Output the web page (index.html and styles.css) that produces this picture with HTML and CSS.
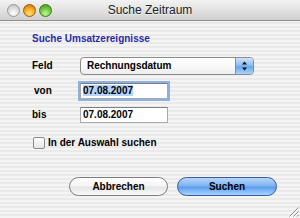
FILE: index.html
```html
<!DOCTYPE html>
<html>
<head>
<meta charset="utf-8">
<link rel="stylesheet" href="styles.css">
</head>
<body>
<div class="window">
  <div class="titlebar">
    <div class="lights">
      <span class="light close"></span>
      <span class="light mini"></span>
      <span class="light zoom"></span>
    </div>
    <div class="title">Suche Zeitraum</div>
    <div></div>
  </div>
  <div class="content">
    <div class="heading">Suche Umsatzereignisse</div>
    <div class="form">
      <div class="label">Feld</div>
      <div class="popup">
        <span class="popup-text">Rechnungsdatum</span>
        <span class="arrows">
          <svg width="7" height="10" viewBox="0 0 7 10"><path d="M3.5 0.5 L6 3.5 H1 Z" fill="#111"/><path d="M3.5 9.5 L6 6.5 H1 Z" fill="#111"/></svg>
        </span>
      </div>
      <div class="label von">von</div>
      <div class="field focus"><span class="sel">07.08.2007</span></div>
      <div class="label">bis</div>
      <div class="field">07.08.2007</div>
    </div>
    <div class="check"><span class="box"></span><span>In der Auswahl suchen</span></div>
    <div class="buttons">
      <div class="btn cancel">Abbrechen</div>
      <div class="btn default">Suchen</div>
    </div>
  </div>
  <svg class="grip" width="11" height="11" viewBox="0 0 11 11">
    <path d="M10.5 1.5 L1.5 10.5 M10.5 5.5 L5.5 10.5 M10.5 9 L9 10.5" stroke="#8a8a8a" stroke-width="1"/>
    <path d="M10.5 2.5 L2.5 10.5 M10.5 6.5 L6.5 10.5" stroke="#fff" stroke-width="1"/>
  </svg>
</div>
</body>
</html>
```
FILE: styles.css
```css
html, body {
  margin: 0;
  padding: 0;
}
body {
  width: 300px;
  height: 218px;
  overflow: hidden;
  font-family: "Liberation Sans", Arial, sans-serif;
}
.window {
  position: relative;
  width: 300px;
  height: 218px;
  display: flex;
  flex-direction: column;
  background: repeating-linear-gradient(#f4f4f4 0 2px, #eaeaea 2px 4px);
}
.titlebar {
  box-sizing: border-box;
  height: 21px;
  border-bottom: 1px solid #8e8e8e;
  background: linear-gradient(#f2f2f2, #e2e2e2 50%, #cfcfcf);
  display: grid;
  grid-template-columns: 1fr auto 1fr;
  align-items: center;
}
.lights {
  display: flex;
  gap: 3px;
  padding-left: 7px;
}
.light {
  box-sizing: border-box;
  width: 13px;
  height: 13px;
  border-radius: 50%;
}
.close {
  background: radial-gradient(circle at 50% 75%, #ffffff, #dcdcdc 55%, #b8b8b8);
  border: 1px solid #9a9a9a;
}
.mini {
  background: radial-gradient(circle at 50% 78%, #ffe27a, #f6a21c 55%, #c7640a);
  border: 1px solid #a15a10;
}
.zoom {
  background: radial-gradient(circle at 50% 78%, #c6f59a, #6cc33a 55%, #3d8c1c);
  border: 1px solid #3f7a1e;
}
.title {
  font-size: 12px;
  color: #222;
  text-shadow: 0 1px 0 rgba(255,255,255,0.6);
  line-height: 14px;
}
.content {
  display: flex;
  flex-direction: column;
  padding: 12px 23px 0 32px;
  font-size: 10px;
  font-weight: bold;
  color: #000;
}
.heading {
  line-height: 12px;
  color: #2a2aa6;
}
.form {
  margin-top: 12px;
  display: grid;
  grid-template-columns: 48px auto;
  row-gap: 8px;
  align-items: center;
  justify-items: start;
}
.label {
  line-height: 12px;
}
.von {
  padding-left: 2px;
}
.popup {
  box-sizing: border-box;
  width: 174px;
  height: 18px;
  border: 1px solid #8c8c8c;
  border-radius: 4px;
  background: linear-gradient(#ffffff, #f7f7f7 60%, #ececec);
  display: flex;
  align-items: center;
  padding-left: 6px;
  overflow: hidden;
}
.popup-text {
  line-height: 12px;
}
.arrows {
  margin-left: auto;
  width: 17px;
  align-self: stretch;
  display: flex;
  align-items: center;
  justify-content: center;
  border-left: 1px solid #6f8fc4;
  background: linear-gradient(#cfe4fb, #8dbdf2 45%, #6aa6ec 55%, #a9d4fb);
}
.field {
  box-sizing: border-box;
  width: 88px;
  height: 16px;
  border: 1px solid #a8a8a8;
  border-top-color: #7e7e7e;
  background: #fff;
  padding-left: 2px;
  line-height: 14px;
}
.focus {
  box-shadow: 0 0 0 2px rgba(125, 165, 225, 0.85);
}
.sel {
  background: #b5d3fa;
}
.check {
  margin-top: 14px;
  margin-left: 1px;
  display: flex;
  align-items: center;
  gap: 3px;
  line-height: 12px;
}
.box {
  box-sizing: border-box;
  width: 12px;
  height: 12px;
  border: 1px solid #8a8a8a;
  border-radius: 2px;
  background: linear-gradient(#fdfdfd, #e6e6e6);
}
.buttons {
  margin-top: 28px;
  padding-left: 37px;
  display: flex;
  gap: 9px;
}
.btn {
  box-sizing: border-box;
  width: 100px;
  height: 19px;
  border-radius: 10px;
  display: flex;
  align-items: center;
  justify-content: center;
  line-height: 12px;
}
.cancel {
  width: 99px;
  border: 1px solid #7d7d7d;
  background: linear-gradient(#ffffff, #f4f4f4 48%, #e4e4e4 52%, #fafafa);
}
.default {
  border: 1px solid #3a5a9c;
  background: linear-gradient(#b7d6f8, #7fb3f1 45%, #5f9eee 55%, #a6d5ff);
}
.grip {
  position: absolute;
  right: 1px;
  bottom: 1px;
}
```
